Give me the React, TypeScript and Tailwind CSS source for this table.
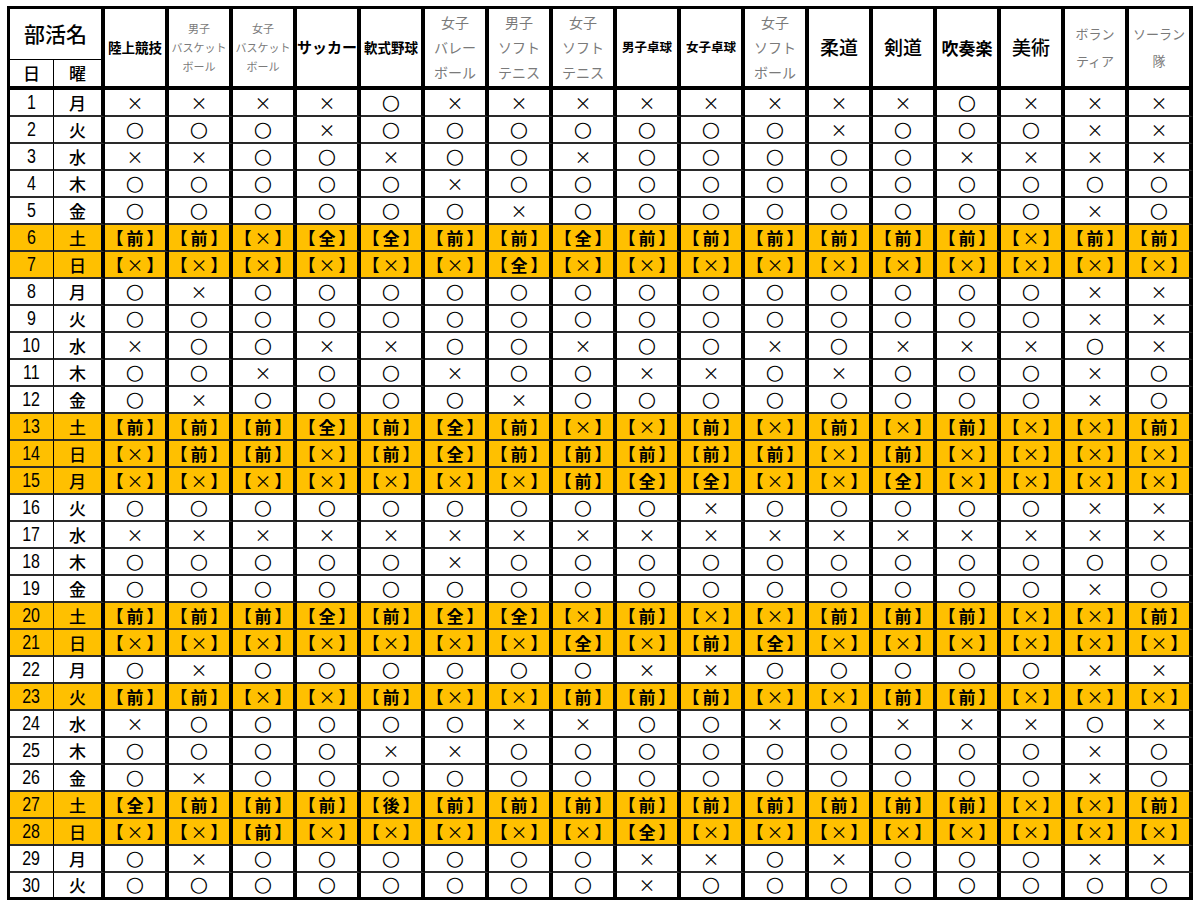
import React from "react";

type Head = { lines: string[]; cls: string };

const GRAY3 = "text-[11px] leading-[19px] text-[#7a7a7a]";
const GRAY3L = "text-[14px] leading-[25px] text-[#7a7a7a]";
const GRAY2 = "text-[13px] leading-[27px] text-[#7a7a7a]";

const HEADERS: Head[] = [
  { lines: ["陸上競技"], cls: "text-[13.5px] font-bold" },
  { lines: ["男子", "バスケット", "ボール"], cls: GRAY3 },
  { lines: ["女子", "バスケット", "ボール"], cls: GRAY3 },
  { lines: ["サッカー"], cls: "text-[15px] font-bold" },
  { lines: ["軟式野球"], cls: "text-[13.5px] font-bold" },
  { lines: ["女子", "バレー", "ボール"], cls: GRAY3L },
  { lines: ["男子", "ソフト", "テニス"], cls: GRAY3L },
  { lines: ["女子", "ソフト", "テニス"], cls: GRAY3L },
  { lines: ["男子卓球"], cls: "text-[12.5px] font-bold" },
  { lines: ["女子卓球"], cls: "text-[12.5px] font-bold" },
  { lines: ["女子", "ソフト", "ボール"], cls: GRAY3L },
  { lines: ["柔道"], cls: "text-[19px] font-medium" },
  { lines: ["剣道"], cls: "text-[19px] font-medium" },
  { lines: ["吹奏楽"], cls: "text-[17px] font-bold" },
  { lines: ["美術"], cls: "text-[19px] font-medium" },
  { lines: ["ボラン", "ティア"], cls: GRAY2 },
  { lines: ["ソーラン", "隊"], cls: GRAY2 },
];

// o = ○, x = ×, 前/全/後 = 土日祝の活動区分
const ROWS: string[] = [
  "xxxxoxxxxxxxxoxxx",
  "oooxoooooooxoooxx",
  "xxooxooxoooooxxxx",
  "oooooxooooooooooo",
  "ooooooxooooooooxo",
  "前前x全全前前全前前前前前前x前前",
  "xxxxxx全xxxxxxxxxx",
  "oxoooooooooooooxx",
  "oooooooooooooooxx",
  "xooxxooxooxoxxxox",
  "ooxooxooxxoxoooxo",
  "oxooooxooooooooxo",
  "前前前全前全前xx前x前x前xx前",
  "x前前x前全前前前前前x前xxxx",
  "xxxxxxx前全全xx全xxxx",
  "oooooooooxoooooxx",
  "xxxxxxxxxxxxxxxxx",
  "oooooxooooooooooo",
  "oooooooooooooooxo",
  "前前前全前全全x前xx前前前xx前",
  "xxxxxxx全x前全xxxxxx",
  "oxooooooxxoooooxx",
  "前前xx前xx前前前xx前前xxx",
  "xoooooxxooxoxxxox",
  "ooooxxoooooooooxo",
  "oxoooooooooooooxo",
  "全前前前後前前前前前前前前前xx前",
  "xx前xxxxx全xxxxxxxx",
  "oxooooooxxoxoooxx",
  "ooooooooxoooooooo",
];

const WEEK = ["月", "火", "水", "木", "金", "土", "日"];
const HOLIDAY = [6, 7, 13, 14, 15, 20, 21, 23, 27, 28];

function Mark({ v, bracket }: { v: string; bracket: boolean }) {
  const ch = v === "x" ? "×" : v === "o" ? "○" : v;
  if (!bracket) {
    if (ch === "○") return <span className="font-['DejaVu_Sans',sans-serif] text-[21px]">○</span>;
    return <span className="text-[17px]">×</span>;
  }
  return (
    <span className="inline-flex items-center justify-center text-[17px] font-bold">
      <span>【</span>
      <span className={ch === "×" ? "mx-[3px] font-normal" : "mx-[3px]"}>{ch}</span>
      <span>】</span>
    </span>
  );
}

export default function App() {
  return (
    <div className="h-[906px] w-[1200px] overflow-hidden bg-white pl-[7px] pt-[6px] font-['Noto_Sans_CJK_JP','Noto_Sans',sans-serif] text-black">
      <table className="w-[1186px] table-fixed border-separate border-spacing-0 border-l-3 border-t-3 border-black">
        <colgroup>
          <col className="w-[44px]" />
          <col className="w-[51px]" />
          {HEADERS.map((_, i) => (
            <col key={i} />
          ))}
        </colgroup>
        <thead>
          <tr>
            <th colSpan={2} className="h-[51px] border-r-4 border-b border-black p-0 text-[21px] font-medium">
              部活名
            </th>
            {HEADERS.map((h, i) => (
              <th key={i} rowSpan={2} className="border-r-4 border-b-4 border-black p-0 align-middle font-normal">
                <div className={`flex flex-col items-center whitespace-nowrap ${h.cls}`}>
                  {h.lines.map((l) => (
                    <span key={l}>{l}</span>
                  ))}
                </div>
              </th>
            ))}
          </tr>
          <tr>
            <th className="h-[26px] border-r border-b-4 border-black p-0 text-[17px] font-medium">日</th>
            <th className="border-r-4 border-b-4 border-black p-0 text-[17px] font-medium">曜</th>
          </tr>
        </thead>
        <tbody>
          {ROWS.map((row, r) => {
            const day = r + 1;
            const hl = HOLIDAY.includes(day);
            const last = r === ROWS.length - 1;
            const bb = last ? "border-b-3 border-b-black" : "border-b-2 border-b-[#2a2a2a]";
            return (
              <tr key={day} className={hl ? "bg-[#ffc000]" : "bg-white"}>
                <td className={`h-[27px] border-r border-r-black ${bb} p-0 text-center align-middle font-['Liberation_Sans',sans-serif] text-[20px] leading-none`}>
                  <span className="inline-block scale-x-[0.8]">{day}</span>
                </td>
                <td className={`border-r-4 border-r-black ${bb} p-0 text-center align-middle text-[17px] font-medium leading-none`}>
                  {WEEK[r % 7]}
                </td>
                {Array.from(row).map((v, c) => (
                  <td key={c} className={`border-r-4 border-r-black ${bb} p-0 text-center align-middle leading-none`}>
                    <Mark v={v} bracket={hl} />
                  </td>
                ))}
              </tr>
            );
          })}
        </tbody>
      </table>
    </div>
  );
}
